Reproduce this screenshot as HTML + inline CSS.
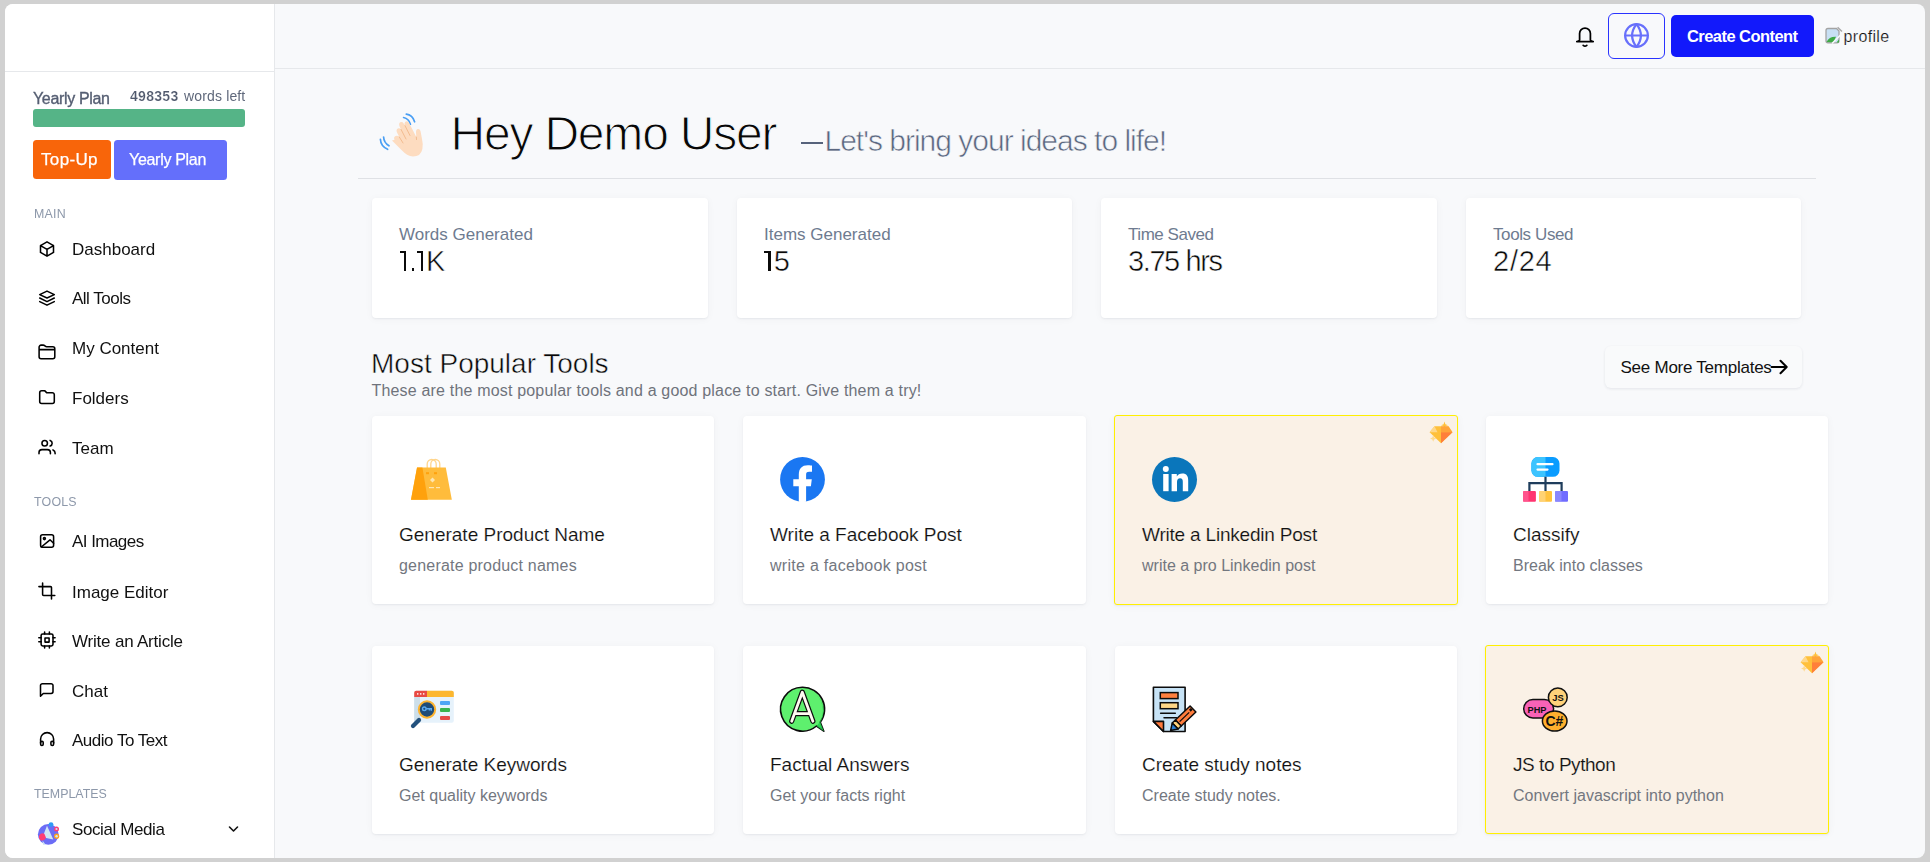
<!DOCTYPE html>
<html><head><meta charset="utf-8">
<style>
*{box-sizing:border-box;margin:0;padding:0}
html,body{width:1930px;height:862px;overflow:hidden;background:#d1d1d1;font-family:"Liberation Sans",sans-serif;color:#0d0d0d}
#panel{position:absolute;left:5px;top:4px;width:1920px;height:854px;border-radius:8px;overflow:hidden;background:#f8f9fb}
#pg{position:absolute;left:-5px;top:-4px;width:1930px;height:862px}
.a{position:absolute}
.t{position:absolute;white-space:nowrap;line-height:1}
#side{position:absolute;left:5px;top:4px;width:270px;height:854px;background:#fff;border-right:1px solid #e6e8eb}
#logo{position:absolute;left:5px;top:4px;width:269px;height:68px;border-bottom:1px solid #e6e8eb}
#hdr{position:absolute;left:275px;top:4px;width:1650px;height:65px;border-bottom:1px solid #e6e8eb}
.nav{font-size:17px;color:#111;will-change:transform}
.sec{font-size:12.4px;color:#8d98aa;letter-spacing:0.2px;will-change:transform}
.ico{position:absolute;left:35px;width:24px;height:24px}
.ico path,.ico rect,.ico circle{fill:none;stroke:#000;stroke-width:1.55;stroke-linecap:round;stroke-linejoin:round}
.stat{position:absolute;top:198px;height:120px;background:#fff;border-radius:4px;box-shadow:0 1px 2px rgba(20,30,60,.06),0 1px 8px rgba(20,30,60,.04)}
.stat .l{position:absolute;left:27px;top:28px;font-size:17px;color:#6e7b90;white-space:nowrap;line-height:1}
.stat .v{position:absolute;left:27px;top:49px;font-size:29px;color:#0b0b0b;white-space:nowrap;line-height:1;-webkit-text-stroke:0.5px #fff}
.card{position:absolute;width:343px;height:188px;background:#fff;border-radius:4px;box-shadow:0 1px 2px rgba(20,30,60,.06),0 1px 8px rgba(20,30,60,.04)}
.card.pro{background:#faf1e6;border:1px solid #fff000;border-radius:3px}
.card .ti{position:absolute;left:27px;top:108.5px;font-size:19px;color:#111;white-space:nowrap;line-height:1;-webkit-text-stroke:0.15px #fff}
.card.pro .ti{-webkit-text-stroke:0.15px #faf1e6}
.card .su{position:absolute;left:27px;top:142px;font-size:16px;color:#73777f;white-space:nowrap;line-height:1}
.card .ic{position:absolute;left:27px;top:31px;width:64px;height:64px}
</style></head><body>
<div id="panel"><div id="pg">
  <div id="side"></div>
  <div id="logo"></div>
  <div id="hdr"></div>

  <!-- sidebar plan -->
  <div class="t" style="will-change:transform;left:33px;top:91px;font-size:16px;color:#555e72;letter-spacing:-0.35px;-webkit-text-stroke:0.35px #555e72">Yearly Plan</div>
  <div class="t" style="will-change:transform;left:130px;top:88.5px;font-size:14px;color:#4f586c;font-weight:700;letter-spacing:0.3px;-webkit-text-stroke:0.2px #fff">498353</div>
  <div class="t" style="will-change:transform;left:184px;top:88.5px;font-size:14px;color:#5f687b;letter-spacing:0.15px">words left</div>
  <div class="a" style="left:33px;top:109px;width:212px;height:18px;background:#55b487;border-radius:3px"></div>
  <div class="a" style="left:33px;top:140px;width:78px;height:39px;background:#f8650a;border-radius:3.5px"></div>
  <div class="t" style="will-change:transform;left:41px;top:151px;font-size:17px;color:#fff;letter-spacing:0.35px;-webkit-text-stroke:0.25px #fff">Top-Up</div>
  <div class="a" style="left:114px;top:140px;width:113px;height:40px;background:#646ffb;border-radius:3.5px"></div>
  <div class="t" style="will-change:transform;left:129px;top:152px;font-size:16px;color:#fff;letter-spacing:-0.3px;-webkit-text-stroke:0.25px #fff">Yearly Plan</div>

  <!-- MAIN -->
  <div class="t sec" style="left:33.5px;top:207.5px">MAIN</div>
  <svg class="ico" style="top:236.8px" viewBox="0 0 24 24"><path d="M12 4.9L18.5 8.6V15.4L12 19.1L5.5 15.4V8.6Z M5.5 8.6L12 12.3L18.5 8.6 M12 12.3V19.1"/></svg>
  <div class="t nav" style="left:72px;top:241px">Dashboard</div>
  <svg class="ico" style="top:285.75px" viewBox="0 0 24 24"><path d="M12 5.1L19.3 8.6L12 12L4.7 8.6Z M4.7 12L12 15.6L19.3 12 M4.7 15.6L12 19.1L19.3 15.6"/></svg>
  <div class="t nav" style="left:72px;top:290px;letter-spacing:-0.5px">All Tools</div>
  <svg class="ico" style="top:339.5px" viewBox="0 0 24 24"><path d="M6.1 18.7H17.8A2 2 0 0 0 19.8 16.7V8.7A2 2 0 0 0 17.8 6.7H11.6Q10.9 6.7 10.2 6.1L9.6 5.6Q9 5.1 8.2 5.1H6.1A2 2 0 0 0 4.1 7.1V16.7A2 2 0 0 0 6.1 18.7Z M4.1 9.6H19.8"/></svg>
  <div class="t nav" style="left:72px;top:340px">My Content</div>
  <svg class="ico" style="top:384.65px" viewBox="0 0 24 24"><path d="M6.7 5.65H9.6L11.6 7.65H17.3A2 2 0 0 1 19.3 9.65V16.45A2 2 0 0 1 17.3 18.45H6.7A2 2 0 0 1 4.7 16.45V7.65A2 2 0 0 1 6.7 5.65Z"/></svg>
  <div class="t nav" style="left:72px;top:389.5px">Folders</div>
  <svg class="ico" style="top:434.8px" viewBox="0 0 24 24"><circle cx="9.7" cy="8.25" r="2.75"/><path d="M4 18.8V17.6A3 3 0 0 1 7 14.6H12.4A3 3 0 0 1 15.4 17.6V18.8 M15.1 5.4A3 3 0 0 1 15.1 11.1 M18 14.9A3.2 3.2 0 0 1 20.1 18V18.8"/></svg>
  <div class="t nav" style="left:72px;top:439.5px">Team</div>

  <!-- TOOLS -->
  <div class="t sec" style="left:33.5px;top:496px">TOOLS</div>
  <svg class="ico" style="top:528.75px" viewBox="0 0 24 24"><rect x="5.6" y="5.75" width="13" height="12.5" rx="2"/><circle cx="9.4" cy="9.6" r="1"/><path d="M6.3 18L15 10.8L18.6 14.2"/></svg>
  <div class="t nav" style="left:72px;top:533px;letter-spacing:-0.55px">AI Images</div>
  <svg class="ico" style="top:578.85px" viewBox="0 0 24 24"><path d="M7.6 4.05V15.5A1 1 0 0 0 8.6 16.5H19.8 M3.9 7.6H15.5A1 1 0 0 1 16.5 8.6V19.95"/></svg>
  <div class="t nav" style="left:72px;top:583.5px">Image Editor</div>
  <svg class="ico" style="top:627.8px" viewBox="0 0 24 24"><rect x="6.1" y="6" width="11.9" height="11.9" rx="1.6"/><rect x="10" y="10.05" width="4.1" height="4.05"/><path d="M9.6 3.9V6 M14.4 3.9V6 M9.6 17.9V20 M14.4 17.9V20 M3.8 9.8H6.1 M3.8 13.7H6.1 M18 9.8H20.1 M18 13.7H20.1"/></svg>
  <div class="t nav" style="left:72px;top:632.5px;letter-spacing:-0.2px">Write an Article</div>
  <svg class="ico" style="top:677.85px" viewBox="0 0 24 24"><path d="M5.5 18.3V7.6A1.9 1.9 0 0 1 7.4 5.7H16.1A1.9 1.9 0 0 1 18 7.6V13.6A1.9 1.9 0 0 1 16.1 15.5H8.3Z"/></svg>
  <div class="t nav" style="left:72px;top:682.5px">Chat</div>
  <svg class="ico" style="top:726.75px" viewBox="0 0 24 24"><path d="M5.6 16V12.1A6.5 6.5 0 0 1 18.6 12.1V16"/><rect x="5.6" y="14.2" width="2.6" height="4.25" rx="1.2"/><rect x="15.9" y="14.2" width="2.7" height="4.25" rx="1.2"/></svg>
  <div class="t nav" style="left:72px;top:732px;letter-spacing:-0.5px">Audio To Text</div>

  <!-- TEMPLATES -->
  <div class="t sec" style="left:33.5px;top:787.5px;letter-spacing:0">TEMPLATES</div>
  <div class="t nav" style="left:72px;top:821px;letter-spacing:-0.4px">Social Media</div>
  <svg class="a" style="left:225px;top:822px;width:16px;height:14px" viewBox="0 0 16 14"><path d="M4.5 5L8.5 9L12.5 5" fill="none" stroke="#111" stroke-width="1.6" stroke-linecap="round" stroke-linejoin="round"/></svg>

  <!-- header -->
  <svg class="a" style="left:1573px;top:25px;width:24px;height:24px" viewBox="0 0 24 24"><path d="M6.6 15V8.4A5.4 5.4 0 0 1 17.4 8.4V15Q17.7 16.3 20.2 16.6H3.8Q6.3 16.3 6.6 15Z M10.2 20.4Q12 21.9 13.8 20.4" fill="none" stroke="#000" stroke-width="1.75" stroke-linecap="round" stroke-linejoin="round"/></svg>
  <div class="a" style="left:1608px;top:13px;width:57px;height:46px;border:1.3px solid #2a33ff;border-radius:6px"></div>
  <svg class="a" style="left:1622px;top:21px;width:29px;height:29px" viewBox="0 0 29 29"><g fill="none" stroke="#6870fb" stroke-width="2.2" stroke-linejoin="round"><circle cx="14.5" cy="14.5" r="11.4"/><path d="M14.5 3.1Q5.7 14.5 14.5 25.9Q23.3 14.5 14.5 3.1Z"/><path d="M3.1 14.5H25.9"/></g></svg>
  <div class="a" style="left:1671px;top:15px;width:143px;height:42px;background:#1219fb;border-radius:5px"></div>
  <div class="t" style="left:1687px;top:28px;font-size:16.5px;font-weight:700;color:#fff;letter-spacing:-0.55px">Create Content</div>
  <div class="t" style="left:1843.5px;top:28.5px;font-size:16px;color:#111;letter-spacing:0.35px;-webkit-text-stroke:0.2px #f8f9fb">profile</div>

  <!-- greeting -->
  <div class="t" style="left:450.5px;top:110px;font-size:48px;color:#070707;letter-spacing:-1.2px;-webkit-text-stroke:1.1px #f8f9fb">Hey Demo User</div>
  <div class="a" style="left:800.5px;top:142px;width:22.3px;height:2px;background:#56627b"></div>
  <div class="t" style="left:824.5px;top:126px;font-size:30px;color:#5b6780;letter-spacing:-1px;-webkit-text-stroke:0.6px #f8f9fb">Let's bring your ideas to life!</div>
  <div class="a" style="left:358px;top:178px;width:1458px;height:1px;background:#dfe1e5"></div>

  <!-- stats -->
  <div class="stat" style="left:372px;width:336px"><div class="l">Words Generated</div><div class="a" style="left:31.6px;top:53px;width:2.4px;height:20px;background:#0b0b0b"></div><div class="a" style="left:28px;top:53px;width:6px;height:2.2px;background:#0b0b0b"></div><div class="a" style="left:39.6px;top:70.3px;width:2.5px;height:2.7px;background:#0b0b0b"></div><div class="a" style="left:48.6px;top:53px;width:2.4px;height:20px;background:#0b0b0b"></div><div class="a" style="left:45px;top:53px;width:6px;height:2.2px;background:#0b0b0b"></div><div class="v" style="left:54px">K</div></div>
  <div class="stat" style="left:737px;width:335px"><div class="l">Items Generated</div><div class="a" style="left:31.2px;top:53px;width:2.4px;height:20px;background:#0b0b0b"></div><div class="a" style="left:27.3px;top:53px;width:6.3px;height:2.2px;background:#0b0b0b"></div><div class="v" style="left:36.8px">5</div></div>
  <div class="stat" style="left:1101px;width:336px"><div class="l" style="letter-spacing:-0.45px">Time Saved</div><div class="v" style="letter-spacing:-1.4px">3.75 hrs</div></div>
  <div class="stat" style="left:1466px;width:335px"><div class="l" style="letter-spacing:-0.4px">Tools Used</div><div class="v" style="letter-spacing:0.75px">2/24</div></div>

  <!-- popular -->
  <div class="t" style="left:371px;top:350px;font-size:28px;color:#070707;-webkit-text-stroke:0.5px #f8f9fb">Most Popular Tools</div>
  <div class="t" style="left:371.5px;top:383px;font-size:16px;color:#6f737b;letter-spacing:0.18px">These are the most popular tools and a good place to start. Give them a try!</div>
  <div class="a" style="left:1605px;top:346px;width:197px;height:42px;background:#f9fafb;border-radius:6px;box-shadow:0 1px 3px rgba(20,30,60,.09)"></div>
  <div class="t" style="left:1620.5px;top:359px;font-size:17px;color:#111;letter-spacing:-0.25px">See More Templates</div>
  <svg class="a" style="left:1769px;top:357px;width:20px;height:20px" viewBox="0 0 20 20"><path d="M2.5 10H17.5 M11.5 3.8L17.7 10L11.5 16.2" fill="none" stroke="#000" stroke-width="2" stroke-linecap="round" stroke-linejoin="round"/></svg>

  <!-- cards row 1 -->
  <div class="card" style="left:372px;top:416px;width:342px"><svg class="ic" viewBox="0 0 64 64"><g fill="none" stroke="#ffd58c" stroke-width="1.3"><path d="M28.2 26V17A4.5 4.5 0 0 1 37.2 17V26"/><path d="M31.8 26V17A4.5 4.5 0 0 1 40.8 17V26"/></g><path d="M18 20.4H46.8L52.8 52.8H12Z" fill="#ffbc3c"/><path d="M18 20.4H23.4L28.8 52.8H12Z" fill="#ffa10c"/><rect x="27" y="25.2" width="3" height="2" fill="#ffa10c"/><rect x="35" y="25.2" width="3" height="2" fill="#ffa10c"/><g fill="#ffe6b0"><path d="M33.5 30.5L36 33L33.5 35.5L31 33Z"/><rect x="30" y="40" width="5" height="1.2"/><rect x="37" y="40" width="4" height="1.2"/></g></svg><div class="ti">Generate Product Name</div><div class="su" style="letter-spacing:0.2px">generate product names</div></div>
  <div class="card" style="left:743px;top:416px"><svg class="ic" viewBox="0 0 64 64"><circle cx="32.5" cy="32.4" r="22.4" fill="#1a77f2"/><path d="M28.8 54.7V39.2H23.3V32.2H28.8V27.5C28.8 21.6 31.8 18.2 37.8 18.2C40 18.2 42 18.5 42 18.5V24.8H39.2C36.6 24.8 36.1 26 36.1 28V32.2H41.8L40.9 39.2H36.1V54.7Q32.5 55.5 28.8 54.7Z" fill="#fff"/></svg><div class="ti">Write a Facebook Post</div><div class="su" style="letter-spacing:0.28px">write a facebook post</div></div>
  <div class="card pro" style="left:1114px;top:415px;width:344px;height:190px"><svg class="ic" viewBox="0 0 64 64"><circle cx="32.5" cy="32.5" r="22.5" fill="#0a76bb"/><g fill="#fff"><circle cx="23.8" cy="22" r="3"/><rect x="21.2" y="27" width="5.4" height="17.2"/><path d="M29.6 27H34.8V29.4C35.8 27.7 37.8 26.6 40.3 26.6C44.8 26.6 46.2 29.3 46.2 33.6V44.2H40.8V34.8C40.8 32.6 40.2 31.2 38.1 31.2C36 31.2 35 32.7 35 35V44.2H29.6Z"/></g></svg><svg class="a" style="right:3px;top:4px;width:26px;height:26px" viewBox="0 0 26 26"><path d="M16.5 1.5L17.4 4.3L20 5.2L17.4 6.1L16.5 8.9L15.6 6.1L13 5.2L15.6 4.3Z" fill="#ffc03a"/><path d="M6.5 6.2H20.5L24.5 12.3L13 23.2L1.6 12.3Z" fill="#ffc03a"/><path d="M13 12.3H24.5L13 23.2Z" fill="#ff7f3a"/><path d="M13 6.2H20.5L24.5 12.3H13Z" fill="#ff8c3a" opacity=".55"/><path d="M6.5 6.2L9.5 12.3H1.6Z" fill="#ffd789"/><path d="M5.2 15.2L6.1 17.6L8.4 18.5L6.1 19.4L5.2 21.8L4.3 19.4L2 18.5L4.3 17.6Z" fill="#ffd98e"/></svg><div class="ti" style="letter-spacing:-0.2px">Write a Linkedin Post</div><div class="su">write a pro Linkedin post</div></div>
  <div class="card" style="left:1486px;top:416px;width:342px"><svg class="ic" viewBox="0 0 64 64"><rect x="18.4" y="10" width="28.1" height="19.8" rx="6.5" fill="#0a9cff"/><path d="M24.9 10H32.5V29.8H24.9A6.5 6.5 0 0 1 18.4 23.3V16.5A6.5 6.5 0 0 1 24.9 10Z" fill="#3dc4ff"/><g stroke="#fff" stroke-width="2.2" stroke-linecap="round"><path d="M24.5 17.2H39.5 M24.5 22.6H34.5"/></g><g fill="none" stroke="#1f3d5c" stroke-width="2.2"><path d="M32.5 29.8V44 M16.4 44V36.1H48.6V44"/></g><rect x="10" y="44" width="12.9" height="10.8" rx="1" fill="#ff3470"/><rect x="26" y="44" width="13" height="10.8" rx="1" fill="#ffc23e"/><rect x="42" y="44" width="13" height="10.8" rx="1" fill="#706cff"/><rect x="10" y="44" width="5.5" height="10.8" fill="#ff6aa0" opacity=".6"/><rect x="26" y="44" width="6.5" height="10.8" fill="#ffd98a" opacity=".7"/><rect x="42" y="44" width="6.5" height="10.8" fill="#9a97ff" opacity=".6"/></svg><div class="ti">Classify</div><div class="su">Break into classes</div></div>
  <!-- cards row 2 -->
  <div class="card" style="left:372px;top:646px;width:342px"><svg class="ic" viewBox="0 0 64 64"><rect x="15.2" y="13.8" width="39.6" height="32" rx="2" fill="#e6f2fb"/><rect x="15.2" y="20" width="5.8" height="25.8" fill="#cddfea"/><path d="M17.2 13.8H28V20H15.2V15.8A2 2 0 0 1 17.2 13.8Z" fill="#e84a43"/><path d="M28 13.8H52.8A2 2 0 0 1 54.8 15.8V20H28Z" fill="#fcb72f"/><g fill="#fff"><rect x="18" y="16.2" width="1.4" height="1.4"/><rect x="21" y="16.2" width="1.4" height="1.4"/><rect x="24" y="16.2" width="1.4" height="1.4"/></g><rect x="41" y="24" width="10" height="4" rx="1" fill="#4ea5f5"/><rect x="41" y="31" width="10" height="4" rx="1" fill="#38b34f"/><rect x="41" y="39" width="10" height="4" rx="1" fill="#e44848"/><path d="M14 49L20 43" stroke="#23517d" stroke-width="4.2" stroke-linecap="round"/><circle cx="28" cy="32.5" r="8.2" fill="#1f4c77" stroke="#fdb431" stroke-width="2"/><g fill="none" stroke="#5aaaf2" stroke-width="1.4"><circle cx="25.3" cy="31.8" r="1.8"/><path d="M27.1 31.8H32.3V33.8 M30.4 31.8V33.4"/></g></svg><div class="ti">Generate Keywords</div><div class="su">Get quality keywords</div></div>
  <div class="card" style="left:743px;top:646px"><svg class="ic" viewBox="0 0 64 64"><path d="M32.3 10.3A21.9 21.9 0 1 0 46.5 49L53.8 54.2L50.3 45.2A21.9 21.9 0 0 0 32.3 10.3Z" fill="#5ef06e" stroke="#0c0c0c" stroke-width="1.6" stroke-linejoin="round"/><path d="M46 17.5A21.9 21.9 0 0 1 46.5 49L53.8 54.2L50.3 45.2A21.9 21.9 0 0 0 46 17.5Z" fill="#1fc94a" opacity=".85"/><path d="M21.7 44.2L32.3 15.2L42.9 44.2 M25.6 36.6H39" fill="none" stroke="#0c0c0c" stroke-width="5.2" stroke-linecap="round" stroke-linejoin="round"/><path d="M21.7 44.2L32.3 15.2L42.9 44.2 M25.6 36.6H39" fill="none" stroke="#fffaf2" stroke-width="2.8" stroke-linecap="round" stroke-linejoin="round"/></svg><div class="ti">Factual Answers</div><div class="su">Get your facts right</div></div>
  <div class="card" style="left:1115px;top:646px;width:342px"><svg class="ic" viewBox="0 0 64 64"><path d="M11.4 10.3H43.1V54.5H21.5L11.4 44.4Z" fill="#c7e3f6" stroke="#0c0c0c" stroke-width="1.6" stroke-linejoin="round"/><path d="M11.4 44.4H21.5V54.5Z" fill="#ff7a3d" stroke="#0c0c0c" stroke-width="1.6" stroke-linejoin="round"/><rect x="18.3" y="15.6" width="17.7" height="6" fill="#ff803f" stroke="#0c0c0c" stroke-width="1.5"/><rect x="18.3" y="25.7" width="17.7" height="6" fill="#ffd787" stroke="#0c0c0c" stroke-width="1.5"/><path d="M18.6 36.2H33.3 M22 40.8H34.5" stroke="#0c0c0c" stroke-width="1.5" stroke-linecap="round"/><path d="M39.2 49.04L33.4 42.96L48.1 28.96L53.9 35.04Z" fill="#ff7d3d" stroke="#0c0c0c" stroke-width="1.5" stroke-linejoin="round"/><path d="M36.05 52.04L30.25 45.96L33.4 42.96L39.2 49.04Z" fill="#ffd27a" stroke="#0c0c0c" stroke-width="1.5" stroke-linejoin="round"/><path d="M36.05 52.04L30.25 45.96L28.6 53.6Z" fill="#2a7fd4" stroke="#0c0c0c" stroke-width="1.5" stroke-linejoin="round"/><path d="M37.6 44.6L47.2 35.4" stroke="#0c0c0c" stroke-width="1.3"/><rect x="47.5" y="31.5" width="2.6" height="2.6" transform="rotate(-44 48.8 32.8)" fill="#0c0c0c"/></svg><div class="ti">Create study notes</div><div class="su">Create study notes.</div></div>
  <div class="card pro" style="left:1485px;top:645px;width:344px;height:189px"><svg class="ic" viewBox="0 0 64 64"><rect x="10.7" y="22.5" width="29.9" height="18.4" rx="9.2" fill="#f962b6" stroke="#111" stroke-width="1.5"/><text x="14.6" y="36.4" font-family="Liberation Sans" font-weight="700" font-size="9.2" fill="#111">PHP</text><circle cx="44.8" cy="20.4" r="9.4" fill="#ffd27a" stroke="#111" stroke-width="1.5"/><text x="39.3" y="24.2" font-family="Liberation Sans" font-weight="700" font-size="9.4" fill="#111">JS</text><ellipse cx="41.7" cy="44" rx="12.3" ry="10" fill="#ffb02e" stroke="#111" stroke-width="1.5"/><text x="32.4" y="49.2" font-family="Liberation Sans" font-weight="700" font-size="14" fill="#111">C#</text></svg><svg class="a" style="right:3px;top:4px;width:26px;height:26px" viewBox="0 0 26 26"><path d="M16.5 1.5L17.4 4.3L20 5.2L17.4 6.1L16.5 8.9L15.6 6.1L13 5.2L15.6 4.3Z" fill="#ffc03a"/><path d="M6.5 6.2H20.5L24.5 12.3L13 23.2L1.6 12.3Z" fill="#ffc03a"/><path d="M13 12.3H24.5L13 23.2Z" fill="#ff7f3a"/><path d="M13 6.2H20.5L24.5 12.3H13Z" fill="#ff8c3a" opacity=".55"/><path d="M6.5 6.2L9.5 12.3H1.6Z" fill="#ffd789"/><path d="M5.2 15.2L6.1 17.6L8.4 18.5L6.1 19.4L5.2 21.8L4.3 19.4L2 18.5L4.3 17.6Z" fill="#ffd98e"/></svg><div class="ti" style="letter-spacing:-0.45px">JS to Python</div><div class="su">Convert javascript into python</div></div>

  <svg class="a" style="left:372px;top:106px;width:60px;height:60px" viewBox="0 0 60 60">
    <g fill="none" stroke="#4a9ff4" stroke-width="1.7" stroke-linecap="round"><path d="M34.3 8.2Q40.5 9 42.6 15.8"/><path d="M31.6 11.5Q36.8 12.6 38.4 18.2"/><path d="M11.6 31Q11.8 36.6 17 39.8"/><path d="M8.4 33.3Q8.7 40.2 15.6 43.3"/></g>
    <g fill="#fddcc0">
      <path d="M20 34.5L29.5 44Q35 50 41 50.6Q48.8 50.6 50.4 43Q51.3 38 50 33L48.8 26.5Q48.3 22.4 45.6 23Q43.8 23.6 44 27L44.3 31L37.4 17.5Q36 14.6 33.8 15.6Q31.8 16.8 33 19.7L31.7 17.4Q30.2 15.2 28.2 16.3Q26.4 17.6 27.6 20.4L29 23.4Q27.6 21.8 25.8 22.5Q23.8 23.8 25 26.4L27.3 31Q25.6 29.2 23.5 30Q21.3 31.2 22.5 33.8Z"/>
    </g>
    <g fill="none" stroke="#f0b88a" stroke-width="0.9" stroke-linecap="round"><path d="M33 19.7L38 29.5"/><path d="M29 23.4L34 33"/><path d="M27.3 31L31 37"/><path d="M44.3 31L44.5 33.5"/></g>
  </svg>
  <svg class="a" style="left:1823px;top:25px;width:22px;height:20px" viewBox="0 0 22 20">
    <path d="M3 5.5Q3 3.5 5 3.5H13.5L16 6V15.8Q16 17.8 14 17.8H5Q3 17.8 3 15.8Z" fill="#c8e0f4" stroke="#a3a3a3" stroke-width="1.3"/>
    <path d="M3.6 17Q6 11.5 13 11.8L10.5 17.5Z" fill="#3faa45"/><path d="M13.5 17.5L16 14.5V17.5Z" fill="#3faa45"/>
    <path d="M14.6 2.2L19 6.6" stroke="#a8a8a8" stroke-width="1.4"/><path d="M9 18.5L18 9.5" stroke="#f8f9fb" stroke-width="1.6"/>
  </svg>
  <svg class="a" style="left:37px;top:822px;width:24px;height:24px" viewBox="0 0 24 24">
    <circle cx="11.3" cy="12.4" r="10.4" fill="#6b6cf6"/>
    <path d="M10 3.8L16.3 17.5L5.5 15.2Z" fill="#cfe6f5"/>
    <path d="M2.2 13.4Q4.2 10.2 7.4 11.7L9 15.8Q7.6 19.2 3.8 18.4Q1.2 16.2 2.2 13.4Z" fill="#ff3d74"/>
    <path d="M5.5 18.5L8.5 22.5L6 22.8Z" fill="#c6dff2"/>
    <circle cx="14" cy="2.6" r="2.4" fill="#2f9bf5"/><circle cx="19.5" cy="7" r="2.5" fill="#ff3d74"/><circle cx="19.5" cy="7" r="1.1" fill="#cfe6f5"/><circle cx="19.6" cy="14.2" r="2.6" fill="#ff9f1a"/><circle cx="19.6" cy="14.2" r="1.2" fill="#cfe6f5"/>
  </svg>

</div></div>
</body></html>
